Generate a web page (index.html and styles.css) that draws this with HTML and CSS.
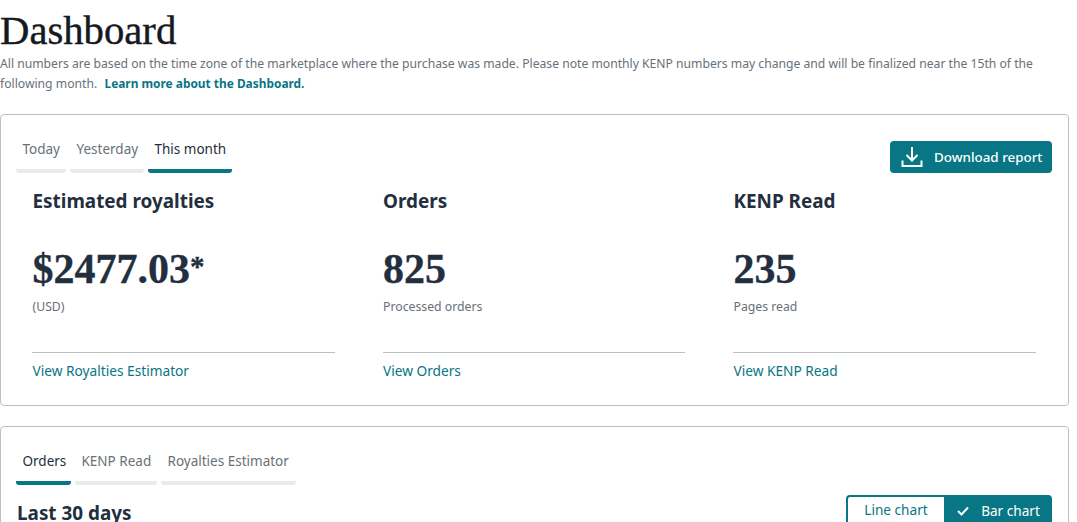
FILE: index.html
```html
<!DOCTYPE html>
<html lang="en">
<head>
<meta charset="utf-8">
<title>Dashboard</title>
<link rel="stylesheet" href="styles.css">
</head>
<body>
<main class="page">
  <h1 class="title">Dashboard</h1>
  <p class="intro">All numbers are based on the time zone of the marketplace where the purchase was made. Please note monthly KENP numbers may change and will be finalized near the 15th of the following month. &nbsp;<a href="#" class="intro-link">Learn more about the Dashboard.</a></p>

  <section class="card card-top">
    <div class="card-head">
      <div class="tabs">
        <a href="#" class="tab tab-today">Today</a>
        <a href="#" class="tab tab-yesterday">Yesterday</a>
        <a href="#" class="tab tab-month active">This month</a>
      </div>
      <button class="btn-download">
        <svg class="dl-icon" viewBox="0 0 22 22" width="22" height="22" fill="none" stroke="#fff" stroke-width="2"><path d="M11 1v13M5.500 9l5.500 5.500 5.500-5.500"/><path d="M1.500 14.500v5.500h19v-5.500"/></svg>
        <span>Download report</span>
      </button>
    </div>
    <div class="metrics">
      <div class="metric">
        <h2 class="metric-title">Estimated royalties</h2>
        <div class="metric-value">$2477.03<span class="asterisk">*</span></div>
        <div class="metric-note">(USD)</div>
        <a href="#" class="metric-link">View Royalties Estimator</a>
      </div>
      <div class="metric">
        <h2 class="metric-title">Orders</h2>
        <div class="metric-value">825</div>
        <div class="metric-note">Processed orders</div>
        <a href="#" class="metric-link">View Orders</a>
      </div>
      <div class="metric">
        <h2 class="metric-title">KENP Read</h2>
        <div class="metric-value">235</div>
        <div class="metric-note">Pages read</div>
        <a href="#" class="metric-link">View KENP Read</a>
      </div>
    </div>
  </section>

  <section class="card card-bottom">
    <div class="tabs tabs-lower">
      <a href="#" class="tab tab-orders active">Orders</a>
      <a href="#" class="tab tab-kenp">KENP Read</a>
      <a href="#" class="tab tab-royal">Royalties Estimator</a>
    </div>
    <div class="chart-head">
      <h2 class="range-title">Last 30 days</h2>
      <div class="toggle">
        <span class="toggle-item">Line chart</span>
        <span class="toggle-item selected">
          <svg viewBox="0 0 12 10" width="12" height="10" fill="none" stroke="#fff" stroke-width="2"><path d="M1 5l3.500 3.500L11 1.500"/></svg>
          Bar chart
        </span>
      </div>
    </div>
  </section>
</main>
</body>
</html>
```
FILE: styles.css
```css
* { box-sizing: border-box; }
html, body { margin: 0; height: 522px; overflow: hidden; background: #fff; }
body { font-family: "Noto Sans", "Open Sans", sans-serif; color: #232f3e; }
a { text-decoration: none; }
.page { width: 1069px; }
.title {
  margin: 0;
  padding-top: 9px;
  font: 400 40.7px/44px "Liberation Serif", serif;
  -webkit-text-stroke: 0.4px #16191f;
  color: #16191f;
}
.intro {
  margin: 1px 0 0;
  font-size: 12.17px;
  line-height: 20px;
  color: #687078;
}
.intro-link { margin-left: 1px; color: #087684; font-size: 11.9px; line-height: 12px; font-weight: 700; }
.card {
  border: 1px solid #bcc2c2;
  border-radius: 4px;
  background: #fff;
}
.card-top { margin-top: 20px; height: 292px; padding: 0 16px 0 15px; }
.card-head { display: flex; justify-content: space-between; }
.tabs { display: flex; gap: 4px; padding-top: 23px; }
.tab {
  display: block;
  height: 35px;
  padding-left: 6.5px;
  border-bottom: 4px solid #e9ebeb;
  border-radius: 0 0 3px 3px;
  font-size: 13.5px;
  line-height: 22px;
  color: #687078;
}
.tab.active { border-bottom-color: #087684; color: #232f3e; }
.tab-today { width: 50px; }
.tab-yesterday { width: 74px; }
.tab-month { width: 84px; }
.btn-download {
  display: flex;
  align-items: center;
  gap: 11px;
  width: 162px;
  height: 32px;
  margin-top: 26px;
  padding: 0 0 0 11px;
  border: 0;
  border-radius: 4px;
  background: #087684;
  color: #fff;
  font: 500 13.4px "Noto Sans", sans-serif;
}
.metrics { display: flex; gap: 48px; padding-left: 16px; }
.metric { width: 302.500px; padding-top: 16px; }
.metric-title {
  margin: 0 0 0 0.5px;
  font-size: 18.9px;
  line-height: 24px;
  font-weight: 700;
  color: #232f3e;
}
.metric-value {
  margin: 32px 0 0 0.5px;
  font: 700 42px/48px "Liberation Serif", serif;
  -webkit-text-stroke: 0.3px #232f3e;
  color: #232f3e;
}
.asterisk { font-size: 29px; line-height: 0; vertical-align: 7px; }
.metric-note {
  margin: 5px 0 0 0.5px;
  padding-bottom: 36px;
  font-size: 12.25px;
  line-height: 18px;
  color: #687078;
}
.metric-link {
  display: block;
  padding: 9px 0 0 0.5px;
  border-top: 1px solid #bcc2c2;
  font-size: 13.7px;
  line-height: 18px;
  color: #087684;
}
.card-bottom { margin-top: 20px; height: 140px; padding: 0 16px 0 15px; }
.tabs-lower { padding-top: 23px; }
.tab-orders { width: 55px; }
.tab-kenp { width: 82px; }
.tab-royal { width: 135px; }
.chart-head { display: flex; justify-content: space-between; align-items: flex-start; }
.range-title {
  margin: 16px 0 0 1px;
  font-size: 18.9px;
  line-height: 24px;
  font-weight: 700;
  color: #232f3e;
}
.toggle {
  display: flex;
  height: 32px;
  margin-top: 10px;
  border: 2px solid #087684;
  border-radius: 4px;
  font-size: 13.6px;
  line-height: 26px;
}
.toggle-item { width: 96px; text-align: center; color: #087684; }
.toggle-item.selected {
  display: flex;
  align-items: center;
  justify-content: center;
  gap: 12px;
  width: 106px;
  padding-left: 3px;
  background: #087684;
  color: #fff;
}
```
